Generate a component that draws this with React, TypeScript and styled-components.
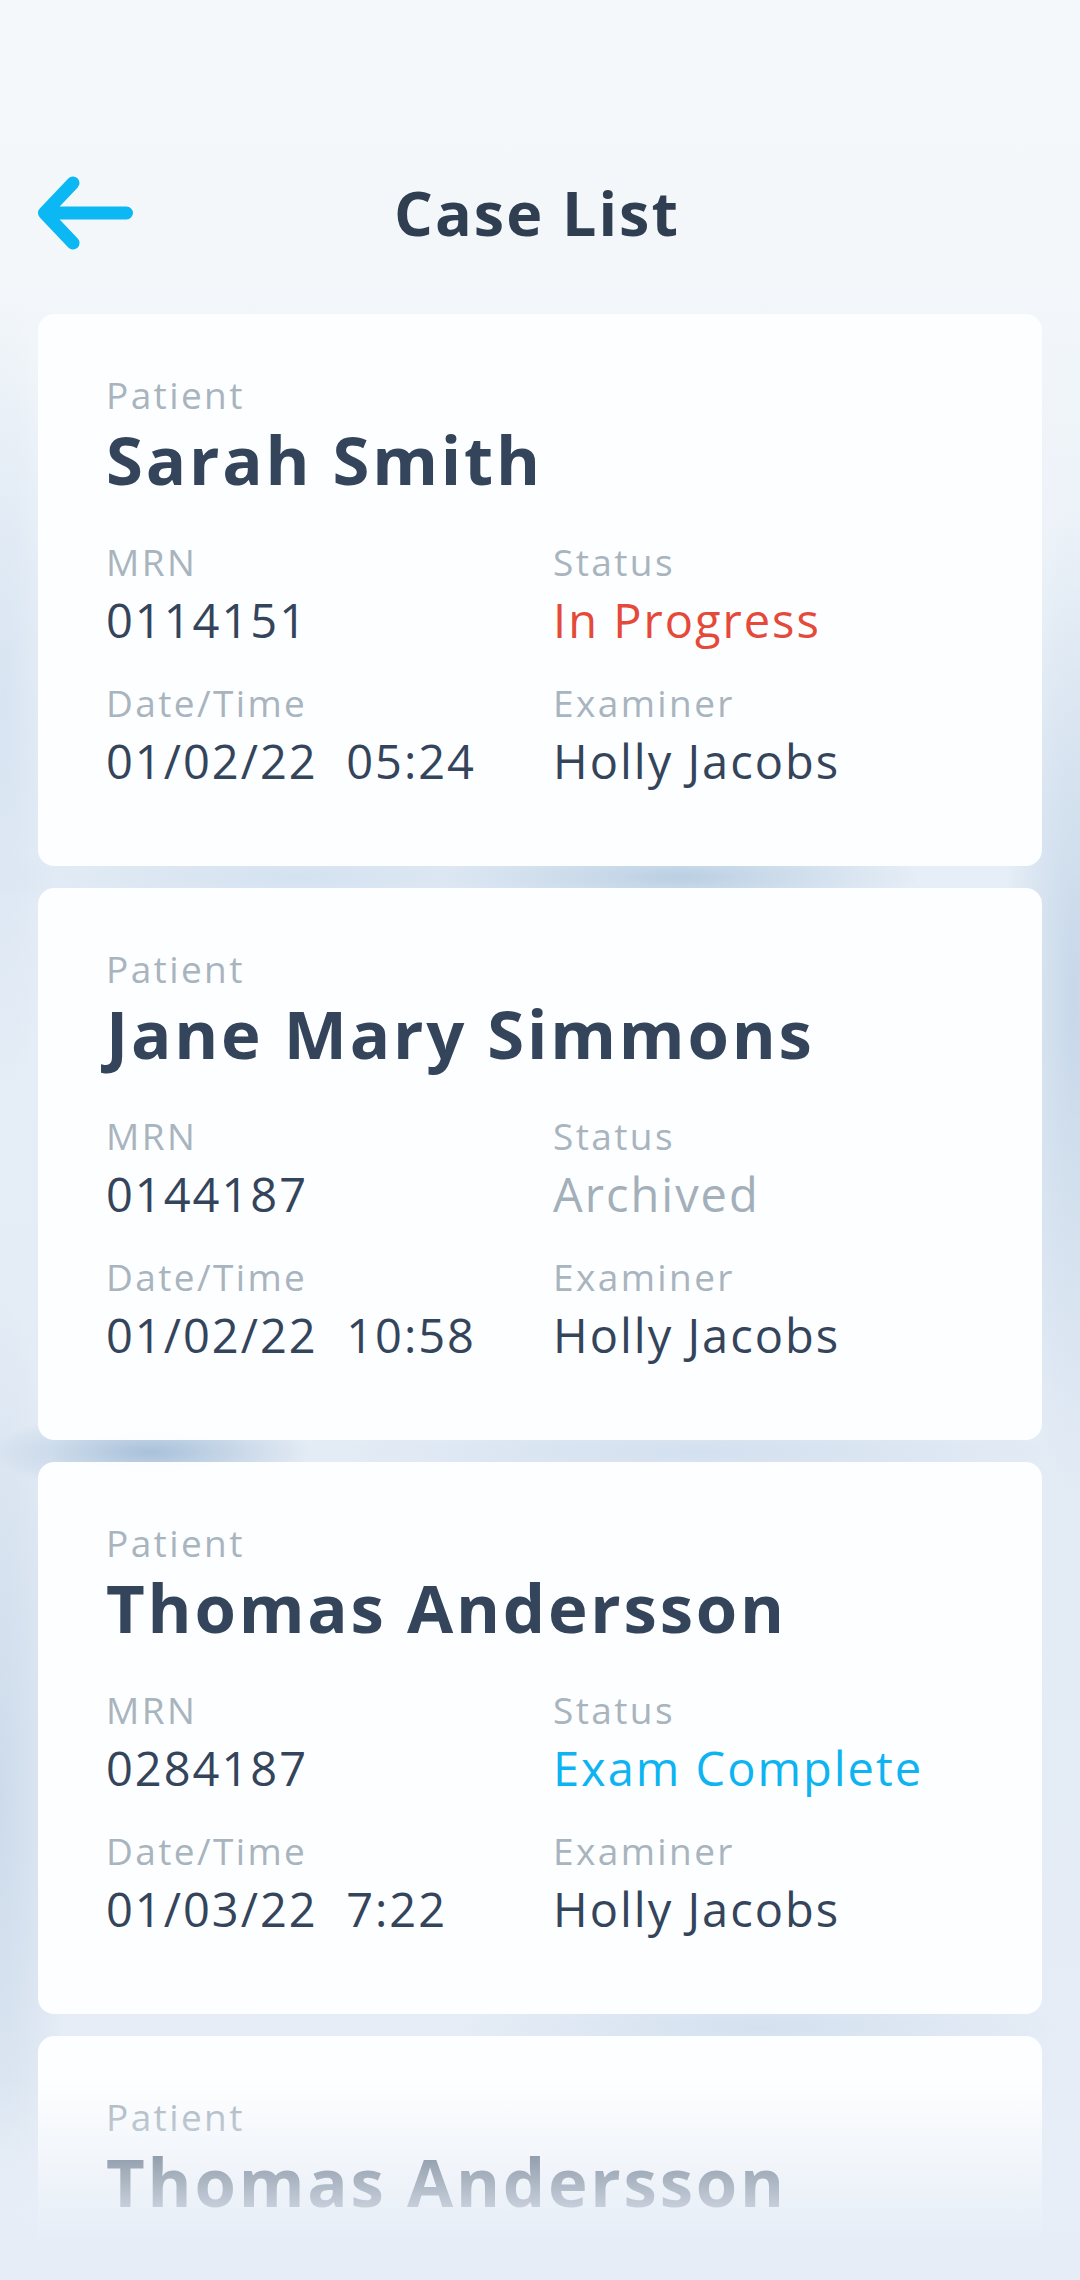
import React from "react";
import styled, { createGlobalStyle } from "styled-components";

const GlobalStyle = createGlobalStyle`
  html, body {
    margin: 0;
    padding: 0;
    background: #eef3f9;
  }
  * { box-sizing: border-box; }
`;

const Screen = styled.div`
  position: relative;
  width: 1080px;
  height: 2280px;
  overflow: hidden;
  font-family: "Open Sans", "Noto Sans", sans-serif;
  background:
    radial-gradient(ellipse 240px 40px at 680px 877px, rgba(150, 182, 210, 0.55), rgba(150, 182, 210, 0)),
    radial-gradient(ellipse 320px 40px at 300px 877px, rgba(190, 210, 230, 0.45), rgba(190, 210, 230, 0)),
    radial-gradient(ellipse 160px 40px at 150px 1452px, rgba(130, 165, 200, 0.6), rgba(130, 165, 200, 0)),
    radial-gradient(ellipse 360px 40px at 700px 1452px, rgba(190, 210, 232, 0.45), rgba(190, 210, 232, 0)),
    radial-gradient(ellipse 300px 40px at 760px 2027px, rgba(190, 210, 232, 0.45), rgba(190, 210, 232, 0)),
    radial-gradient(ellipse 70px 500px at 1075px 1000px, rgba(175, 198, 222, 0.55), rgba(175, 198, 222, 0)),
    radial-gradient(ellipse 70px 500px at 0px 1800px, rgba(175, 198, 222, 0.45), rgba(175, 198, 222, 0)),
    radial-gradient(ellipse 60px 400px at 5px 700px, rgba(205, 220, 238, 0.6), rgba(205, 220, 238, 0)),
    linear-gradient(180deg, #f5f8fb 0px, #f3f7fa 260px, #e6eef7 800px, #e3ebf5 1500px, #e6edf6 2280px);
`;

const Header = styled.header`
  display: grid;
  grid-template-columns: 96px 1fr 96px;
  align-items: center;
  height: 74px;
  margin-top: 176px;
  padding: 0 38px;
`;

const BackButton = styled.button`
  display: flex;
  align-items: center;
  justify-content: flex-start;
  width: 96px;
  height: 74px;
  padding: 0;
  border: none;
  background: transparent;
  cursor: pointer;
`;

const Title = styled.h1`
  margin: 0;
  text-align: center;
  font-size: 61px;
  line-height: 74px;
  font-weight: 700;
  color: #2f3e50;
  letter-spacing: 2px;
  padding-right: 6px;
`;

const List = styled.main`
  display: flex;
  flex-direction: column;
  gap: 22px;
  margin-top: 64px;
  padding: 0 38px;
`;

const Card = styled.section`
  height: 552px;
  flex-shrink: 0;
  padding: 60px 68px 0;
  border-radius: 16px;
  background: rgba(253, 254, 255, 0.98);
`;

const Label = styled.div`
  font-size: 37px;
  line-height: 42px;
  font-weight: 500;
  color: #a8b4be;
  letter-spacing: 2.4px;
`;

const Name = styled.div`
  margin-top: 3px;
  font-size: 67px;
  line-height: 80px;
  font-weight: 700;
  color: #34455b;
  letter-spacing: 2.8px;
  white-space: nowrap;
`;

const Grid = styled.div`
  display: grid;
  grid-template-columns: 447px 1fr;
  row-gap: 34px;
  margin-top: 42px;
`;

const Field = styled.div`
  display: flex;
  flex-direction: column;
  gap: 9px;
`;

const Value = styled.div<{ $tone?: "default" | "red" | "muted" | "blue" }>`
  font-size: 47px;
  line-height: 56px;
  font-weight: 500;
  letter-spacing: 2px;
  white-space: pre;
  color: ${(p) =>
    p.$tone === "red"
      ? "#e4493a"
      : p.$tone === "muted"
      ? "#a3afb9"
      : p.$tone === "blue"
      ? "#0db4f1"
      : "#34455b"};
`;

const Fade = styled.div`
  position: absolute;
  left: 0;
  right: 0;
  bottom: 0;
  height: 200px;
  pointer-events: none;
  background: linear-gradient(
    180deg,
    rgba(233, 239, 247, 0) 0%,
    rgba(233, 239, 247, 0.55) 40%,
    rgba(231, 238, 247, 0.85) 67%,
    rgba(230, 237, 246, 1) 82%,
    rgba(230, 237, 246, 1) 100%
  );
`;

type Tone = "default" | "red" | "muted" | "blue";

interface CaseItem {
  name: string;
  mrn: string;
  status: string;
  tone: Tone;
  date: string;
  examiner: string;
}

const cases: CaseItem[] = [
  { name: "Sarah Smith", mrn: "0114151", status: "In Progress", tone: "red", date: "01/02/22  05:24", examiner: "Holly Jacobs" },
  { name: "Jane Mary Simmons", mrn: "0144187", status: "Archived", tone: "muted", date: "01/02/22  10:58", examiner: "Holly Jacobs" },
  { name: "Thomas Andersson", mrn: "0284187", status: "Exam Complete", tone: "blue", date: "01/03/22  7:22", examiner: "Holly Jacobs" },
  { name: "Thomas Andersson", mrn: "0284187", status: "Exam Complete", tone: "blue", date: "01/03/22  7:22", examiner: "Holly Jacobs" },
];

const BackArrow = () => (
  <svg width="96" height="74" viewBox="0 0 96 74" fill="none">
    <path
      d="M35 7 L6.5 37 L35 67 M6.5 37 L88.5 37"
      stroke="#0bb8f4"
      strokeWidth="13"
      strokeLinecap="round"
      strokeLinejoin="round"
    />
  </svg>
);

const CaseCard = ({ item }: { item: CaseItem }) => (
  <Card>
    <Label>Patient</Label>
    <Name>{item.name}</Name>
    <Grid>
      <Field>
        <Label>MRN</Label>
        <Value>{item.mrn}</Value>
      </Field>
      <Field>
        <Label>Status</Label>
        <Value $tone={item.tone}>{item.status}</Value>
      </Field>
      <Field>
        <Label>Date/Time</Label>
        <Value>{item.date}</Value>
      </Field>
      <Field>
        <Label>Examiner</Label>
        <Value>{item.examiner}</Value>
      </Field>
    </Grid>
  </Card>
);

export default function App() {
  return (
    <>
      <GlobalStyle />
      <Screen>
        <Header>
          <BackButton aria-label="Back">
            <BackArrow />
          </BackButton>
          <Title>Case List</Title>
          <span />
        </Header>
        <List>
          {cases.map((c, i) => (
            <CaseCard key={i} item={c} />
          ))}
        </List>
        <Fade />
      </Screen>
    </>
  );
}
